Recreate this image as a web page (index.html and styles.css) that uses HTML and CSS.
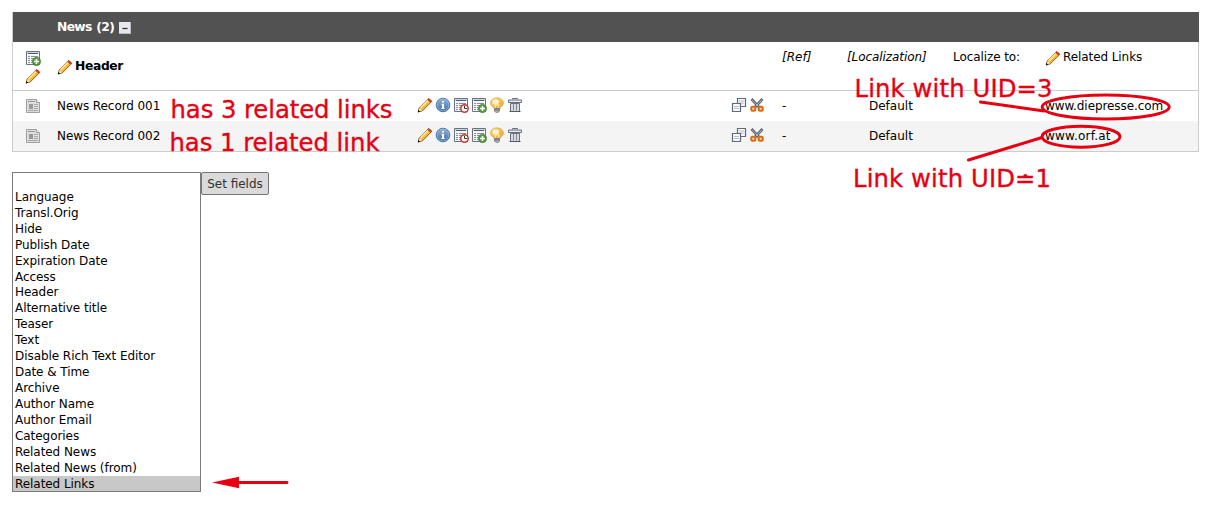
FILE: index.html
```html
<!DOCTYPE html>
<html lang="en">
<head>
<meta charset="utf-8">
<title>News</title>
<link rel="stylesheet" href="styles.css">
</head>
<body>
<svg class="sprite" width="0" height="0">
  <defs>
    <linearGradient id="blue" x1="0" y1="0" x2="0" y2="1"><stop offset="0" stop-color="#8fb2da"/><stop offset="1" stop-color="#3f70ae"/></linearGradient>
    <linearGradient id="bulbfill" x1="0" y1="0" x2="1" y2="1"><stop offset="0" stop-color="#fbd777"/><stop offset="1" stop-color="#eea32e"/></linearGradient>
  </defs>
  <symbol id="pencil" viewBox="0 0 16 16">
    <path d="M1.200 14.800 2.200 11 10.800 2.400 12 1.600 14.600 4.200 13.800 5.400 5.200 14Z" fill="#f9b934" stroke="#6b4418" stroke-width=".8"/>
    <path d="M3.500 11 10.800 3.700" stroke="#ffe995" stroke-width="1.700"/>
    <path d="M10.900 2.600 12 1.700 14.500 4.200 13.600 5.300Z" fill="#dc3a2c" stroke="#a32018" stroke-width=".6"/>
    <path d="M2.700 11.100 5 13.500 1.900 14.300Z" fill="#f8e6c8"/>
    <path d="M.8 15.400 1.400 13 3.200 14.800Z" fill="#111"/>
  </symbol>
  <symbol id="list" viewBox="0 0 16 16">
    <path d="M1.500 1.500h13v13h-13z" fill="#f6f7f9" stroke="#69727f"/>
    <path d="M2 2h12v2H2z" fill="#cfd5de"/>
    <path d="M3 3.500h10" stroke="#525d6d"/>
    <path d="M3 6.500h2m1 0h7M3 8.500h2m1 0h7M3 10.500h2m1 0h7M3 12.500h2m1 0h4" stroke="#858e9b"/>
  </symbol>
  <symbol id="new" viewBox="0 0 16 16">
    <use href="#list" width="16" height="16"/>
    <circle cx="11.500" cy="11.500" r="4.200" fill="#55993d" stroke="#397329" stroke-width=".5"/>
    <path d="M11.500 9v5M9 11.500h5" stroke="#fff" stroke-width="1.600"/>
  </symbol>
  <symbol id="history" viewBox="0 0 16 16">
    <use href="#list" width="16" height="16"/>
    <circle cx="11.500" cy="11.500" r="3.700" fill="#fff" stroke="#c7382d" stroke-width="1.500"/>
    <path d="M11.500 8.800v2.700H14" fill="none" stroke="#333" stroke-width="1"/>
  </symbol>
  <symbol id="info" viewBox="0 0 16 16">
    <circle cx="8" cy="8" r="6.800" fill="url(#blue)" stroke="#3c659b" stroke-width=".9"/>
    <circle cx="8" cy="8" r="5.900" fill="none" stroke="#a9c3e3" stroke-width=".6"/>
    <path d="M7 4h2v1.600H7zM6.400 6.800H9v4.100h.7V12H6.300v-1.100H7V7.800h-.6z" fill="#fff"/>
  </symbol>
  <symbol id="bulb" viewBox="0 0 16 16">
    <path d="M8 .9C4 .9 1.600 3.300 1.600 6.100c0 2 1.300 3 2.600 4l1 1.700h5.600l1-1.700c1.300-1 2.600-2 2.600-4C14.400 3.300 12 .9 8 .9Z" fill="url(#bulbfill)" stroke="#d8a443" stroke-width=".8"/>
    <ellipse cx="6.700" cy="5" rx="3.300" ry="2.800" fill="#fff4c8"/>
    <path d="M6.400 11 6 7.500l1.300 1L8 7.500l.8 1L10 7.500 9.600 11" fill="none" stroke="#fff3c0" stroke-width=".8"/>
    <path d="M5.500 11.500h5V14L9.300 15.300H6.700L5.500 14Z" fill="#aeb2b9" stroke="#656a73" stroke-width=".7"/>
    <path d="M5.500 12.900h5" stroke="#555b65" stroke-width=".8"/>
  </symbol>
  <symbol id="trash" viewBox="0 0 16 16">
    <path d="M5.500 2.500v-1h5v1" fill="none" stroke="#69717d"/>
    <path d="M1.500 3h13v2.500h-13z" fill="#e6e9ed" stroke="#69717d"/>
    <path d="M3.500 6.500h9v8h-9z" fill="#d5dae1" stroke="#69717d"/>
    <path d="M6.500 7v6.500M9.500 7v6.500" stroke="#848c98"/>
    <path d="M2.500 14.500h11" stroke="#505965"/>
  </symbol>
  <symbol id="copy" viewBox="0 0 16 16">
    <path d="M6.500 1.500h8v8h-8z" fill="#f7f8fa" stroke="#626a7a" stroke-width="1.200"/>
    <path d="M8 4h5M8 6h5" stroke="#bcc1c9"/>
    <path d="M1.500 6.500h8v8h-8z" fill="#f7f8fa" stroke="#626a7a" stroke-width="1.200"/>
    <path d="M3 9.500h5M3 11.500h5" stroke="#bcc1c9"/>
  </symbol>
  <symbol id="cut" viewBox="0 0 16 16">
    <path d="M2.500 2 10.800 11M13.500 2 5.200 11" stroke="#575d68" stroke-width="2.600"/>
    <path d="M3 2.700 10.400 10.500M13 2.700 5.600 10.500" stroke="#b8bdc6" stroke-width="1"/>
    <rect x="2.300" y="9.700" width="4" height="4" rx="1.200" fill="#ffdfbc" stroke="#d96a14" stroke-width="2.100"/>
    <rect x="9.700" y="9.700" width="4" height="4" rx="1.200" fill="#ffdfbc" stroke="#d96a14" stroke-width="2.100"/>
  </symbol>
  <symbol id="news" viewBox="0 0 16 16">
    <path d="M1.500 1.500h10l3 3v10h-13z" fill="#dedede" stroke="#a0a0a0"/>
    <path d="M11.500 1.500v3h3" fill="#fff" stroke="#999"/>
    <path d="M3 3.500h7" stroke="#999"/>
    <path d="M4 6h4v5H4z" fill="#999"/>
    <path d="M9 6.500h4M9 8.500h4M9 10.500h4M3 12.500h10" stroke="#a8a8a8"/>
  </symbol>
</svg>

<main class="page">
  <section class="panel">
    <header class="bar">News (2) <svg class="toggle" viewBox="0 0 12 12"><path d="M0 0h12v12H0z" fill="#e7e8ee"/><path d="M11.500 0v11.500H0" fill="none" stroke="#b8bac4"/><path d="M3.500 6.500h5" stroke="#333" stroke-width="1.300"/></svg></header>
    <div class="row head">
      <div class="lead stack"><svg class="icon"><use href="#new"/></svg><svg class="icon"><use href="#pencil"/></svg></div>
      <div class="title"><svg class="icon"><use href="#pencil"/></svg><b>Header</b></div>
      <div></div><div></div>
      <i class="ref">[Ref]</i><i class="loc">[Localization]</i><span class="to">Localize to:</span>
      <div class="related"><svg class="icon"><use href="#pencil"/></svg><span>Related Links</span></div>
    </div>
    <div class="row">
      <div class="lead"><svg class="icon"><use href="#news"/></svg></div>
      <span class="record">News Record 001</span>
      <div class="actions"><svg class="icon"><use href="#pencil"/></svg><svg class="icon"><use href="#info"/></svg><svg class="icon"><use href="#history"/></svg><svg class="icon"><use href="#new"/></svg><svg class="icon"><use href="#bulb"/></svg><svg class="icon"><use href="#trash"/></svg></div>
      <div class="actions clip"><svg class="icon"><use href="#copy"/></svg><svg class="icon"><use href="#cut"/></svg></div>
      <span>-</span><span class="lang">Default</span><span></span><span class="site">www.diepresse.com</span>
    </div>
    <div class="row alt">
      <div class="lead"><svg class="icon"><use href="#news"/></svg></div>
      <span class="record">News Record 002</span>
      <div class="actions"><svg class="icon"><use href="#pencil"/></svg><svg class="icon"><use href="#info"/></svg><svg class="icon"><use href="#history"/></svg><svg class="icon"><use href="#new"/></svg><svg class="icon"><use href="#bulb"/></svg><svg class="icon"><use href="#trash"/></svg></div>
      <div class="actions clip"><svg class="icon"><use href="#copy"/></svg><svg class="icon"><use href="#cut"/></svg></div>
      <span>-</span><span class="lang">Default</span><span></span><span class="site short">www.orf.at</span>
    </div>
  </section>

  <section class="fields">
    <ul class="listbox">
      <li></li><li>Language</li><li>Transl.Orig</li><li>Hide</li><li>Publish Date</li><li>Expiration Date</li><li>Access</li><li>Header</li><li>Alternative title</li><li>Teaser</li><li>Text</li><li>Disable Rich Text Editor</li><li>Date &amp; Time</li><li>Archive</li><li>Author Name</li><li>Author Email</li><li>Categories</li><li>Related News</li><li>Related News (from)</li><li class="selected">Related Links</li>
    </ul>
    <button class="set">Set fields</button>
  </section>

  <svg class="notes" viewBox="0 0 1206 508">
    <g class="marks">
      <ellipse cx="1105.700" cy="107" rx="63.500" ry="12"/>
      <ellipse cx="1081" cy="136.700" rx="39" ry="10.500"/>
      <path d="M980.500 102 1044 111M968.500 160 1042 137.500M238 482.500H287"/>
    </g>
    <path class="solid" d="M212 482.500 239 476.800V488.200Z"/>
    <circle class="solid" cx="1025.300" cy="176" r="2"/>
    <text x="170.500" y="118" textLength="222">has 3 related links</text>
    <text x="169.500" y="151" textLength="210">has 1 related link</text>
    <text x="854.500" y="97" textLength="198">Link with UID=3</text>
    <text x="853" y="187" textLength="198">Link with UID=1</text>
  </svg>
</main>
</body>
</html>
```
FILE: styles.css
```css
* { box-sizing: border-box; }
body {
  margin: 0;
  background: #fff;
  color: #000;
  font: 12px/16px "DejaVu Sans", Verdana, sans-serif;
}
.sprite { position: absolute; }
.page {
  position: relative;
  width: 1206px;
  height: 508px;
  padding: 12px 7px 0 12px;
  overflow: hidden;
}
.panel { height: 140px; border: 1px solid #ccc; border-top: 0; }
.bar {
  display: flex;
  align-items: center;
  gap: 5px;
  height: 30px;
  margin: 0 -1px 0 0;
  padding-left: 44px;
  background: #525252;
  color: #fff;
  font-weight: bold;
  letter-spacing: -.65px;
  word-spacing: 1px;
}
.bar, .title b { font-size: 12.3px; }
.toggle { width: 12px; height: 12px; margin-top: 1px; }
.row {
  display: grid;
  grid-template-columns: 44px 360px 315px 50px 65px 106px 92px 1fr;
  align-items: center;
  height: 30px;
  padding-bottom: 2px;
}
.head { height: 49px; padding: 0; border-bottom: 1px solid #ccc; align-items: start; }
.alt { background: #f4f4f4; }
.row > span { padding-top: 1px; }
.icon { display: block; flex: none; width: 16px; height: 16px; }
.lead { padding-left: 12px; }
.row:not(.head) .lead { padding-top: 2px; }
.stack { display: flex; flex-direction: column; gap: 2px; padding-top: 8px; }
.title { display: flex; gap: 2px; padding-top: 17px; letter-spacing: -.35px; }
.title b { margin-top: -1px; }
.row > .ref, .row > .loc, .row > .to { padding-top: 7px; }
.loc, .to, .record, .site { letter-spacing: -.08px; }
.short { letter-spacing: .2px; }
.related { display: flex; gap: 2px; padding-top: 8px; letter-spacing: -.08px; }
.related span { margin-top: -1px; }
.actions { display: flex; gap: 2px; }
.clip { margin-left: -1px; }
.lang { padding-left: 22px; }
.fields { display: flex; align-items: flex-start; margin-top: 20px; }
.listbox {
  width: 189px;
  height: 320px;
  margin: 0;
  padding: 0;
  border: 1px solid #7b7b7b;
  list-style: none;
  letter-spacing: -.06px;
}
.listbox li { height: 15.93px; padding-left: 2px; line-height: 16px; }
.listbox .selected { height: 15.33px; background: #c8c8c8; }
.set {
  width: 68px;
  height: 23px;
  padding: 0;
  border: 1px solid #757575;
  border-radius: 2px;
  background: #dadada;
  color: #333;
  font: inherit;
}
.notes {
  position: absolute;
  top: 0;
  left: 0;
  width: 1206px;
  height: 508px;
  pointer-events: none;
}
.notes text { fill: #e60012; stroke: #e60012; stroke-width: .35px; font-size: 24.3px; }
.marks { fill: none; stroke: #e60012; stroke-width: 3; stroke-linecap: round; }
.solid { fill: #e60012; }
```
